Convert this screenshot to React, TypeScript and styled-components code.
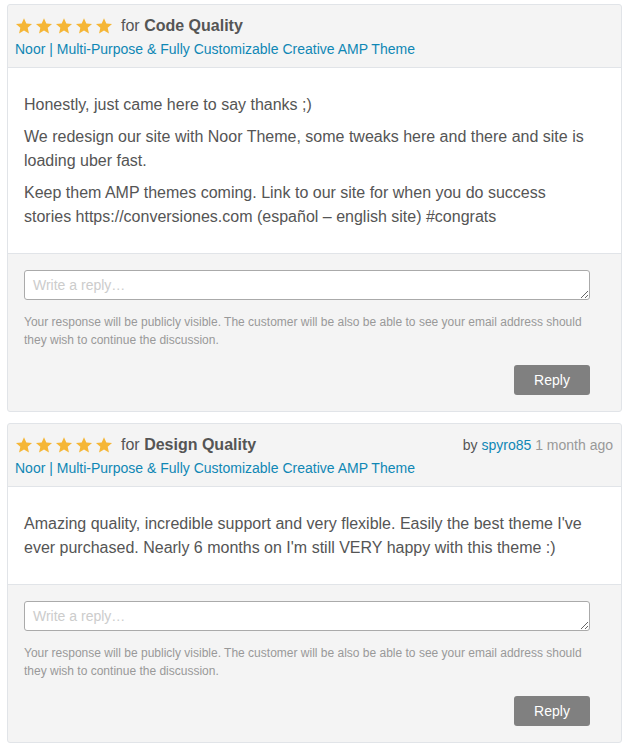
import React from "react";
import styled, { createGlobalStyle } from "styled-components";

const GlobalStyle = createGlobalStyle`
  body {
    margin: 0;
    padding: 4px 8px 8px 7px;
    background: #ffffff;
    font-family: "Liberation Sans", Arial, Helvetica, sans-serif;
    color: #555555;
  }
`;

type Review = {
  category: string;
  item: string;
  author?: string;
  date?: string;
  paragraphs: string[];
};

const reviews: Review[] = [
  {
    category: "Code Quality",
    item: "Noor | Multi-Purpose & Fully Customizable Creative AMP Theme",
    paragraphs: [
      "Honestly, just came here to say thanks ;)",
      "We redesign our site with Noor Theme, some tweaks here and there and site is loading uber fast.",
      "Keep them AMP themes coming. Link to our site for when you do success stories https://conversiones.com (español – english site) #congrats",
    ],
  },
  {
    category: "Design Quality",
    item: "Noor | Multi-Purpose & Fully Customizable Creative AMP Theme",
    author: "spyro85",
    date: "1 month ago",
    paragraphs: [
      "Amazing quality, incredible support and very flexible. Easily the best theme I've ever purchased. Nearly 6 months on I'm still VERY happy with this theme :)",
    ],
  },
];

const Star = () => (
  <svg width="18" height="18" viewBox="0 0 24 24">
    <path
      fill="#f5b636"
      d="M12 1.6l3.1 7 7.6.7-5.8 5.1 1.7 7.5L12 18l-6.6 3.9 1.7-7.5L1.3 9.3l7.6-.7z"
    />
  </svg>
);

const ReviewCard = ({ review }: { review: Review }) => (
  <Card>
    <Header>
      <TopLine>
        <Rating>
          <Stars>
            {[0, 1, 2, 3, 4].map((i) => (
              <Star key={i} />
            ))}
          </Stars>
          <For>
            for <strong>{review.category}</strong>
          </For>
        </Rating>
        {review.author && (
          <Meta>
            by <Link href="#">{review.author}</Link> <Date>{review.date}</Date>
          </Meta>
        )}
      </TopLine>
      <ItemLink href="#">{review.item}</ItemLink>
    </Header>
    <Body>
      {review.paragraphs.map((p, i) => (
        <Paragraph key={i}>{p}</Paragraph>
      ))}
    </Body>
    <ReplyArea>
      <ReplyInput placeholder="Write a reply…" rows={1} />
      <Note>
        Your response will be publicly visible. The customer will be also be able to see your email
        address should they wish to continue the discussion.
      </Note>
      <Actions>
        <ReplyButton>Reply</ReplyButton>
      </Actions>
    </ReplyArea>
  </Card>
);

export default function App() {
  return (
    <>
      <GlobalStyle />
      <List>
        {reviews.map((r, i) => (
          <ReviewCard key={i} review={r} />
        ))}
      </List>
    </>
  );
}

const List = styled.div`
  display: flex;
  flex-direction: column;
  gap: 11px;
  width: 615px;
`;

const Card = styled.div`
  border: 1px solid #e1e4e8;
  border-radius: 3px;
  background: #f4f4f4;
  overflow: hidden;
`;

const Header = styled.div`
  padding: 9px 8px 8px 7px;
  border-bottom: 1px solid #e1e4e8;
`;

const TopLine = styled.div`
  display: flex;
  justify-content: space-between;
  align-items: center;
  height: 24px;
`;

const Rating = styled.div`
  display: flex;
  align-items: center;
  gap: 8px;
`;

const Stars = styled.div`
  display: flex;
  gap: 2px;
  svg {
    display: block;
  }
`;

const For = styled.span`
  font-size: 16px;
  color: #555555;
  strong {
    font-weight: bold;
  }
`;

const Meta = styled.span`
  font-size: 14px;
  color: #555555;
`;

const Link = styled.a`
  color: #0f87b5;
  text-decoration: none;
`;

const Date = styled.span`
  color: #999999;
`;

const ItemLink = styled.a`
  display: block;
  margin-top: 1px;
  font-size: 14px;
  line-height: 20px;
  color: #0f87b5;
  text-decoration: none;
`;

const Body = styled.div`
  background: #ffffff;
  padding: 25px 32px 24px 16px;
  border-bottom: 1px solid #e1e4e8;
`;

const Paragraph = styled.p`
  margin: 0 0 8px;
  font-size: 16px;
  line-height: 24px;
  color: #555555;
  &:last-child {
    margin-bottom: 0;
  }
`;

const ReplyArea = styled.div`
  padding: 16px 31px 16px 16px;
`;

const ReplyInput = styled.textarea`
  display: block;
  box-sizing: border-box;
  width: 100%;
  height: 30px;
  padding: 5px 8px;
  border: 1px solid #aaaaaa;
  border-radius: 3px;
  font-family: "Liberation Sans", Arial, sans-serif;
  font-size: 14px;
  line-height: 18px;
  color: #555555;
  background: #ffffff;
  &::placeholder {
    color: #cccccc;
  }
`;

const Note = styled.p`
  margin: 13px 0 0;
  font-size: 12px;
  line-height: 18px;
  color: #999999;
`;

const Actions = styled.div`
  display: flex;
  justify-content: flex-end;
  margin-top: 16px;
`;

const ReplyButton = styled.button`
  width: 76px;
  height: 30px;
  border: none;
  border-radius: 3px;
  background: #808080;
  color: #ffffff;
  font-family: "Liberation Sans", Arial, sans-serif;
  font-size: 14px;
  cursor: pointer;
`;
